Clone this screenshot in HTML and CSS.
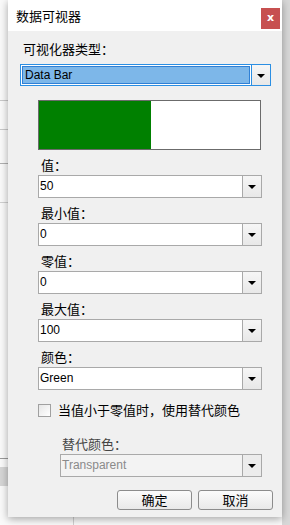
FILE: index.html
```html
<!DOCTYPE html>
<html lang="zh-CN">
<head>
<meta charset="utf-8">
<title>数据可视器</title>
<link rel="stylesheet" href="styles.css">
</head>
<body>
<div class="dialog">
  <div class="titlebar">
    <span class="title">数据可视器</span>
    <span class="close">x</span>
  </div>
  <div class="content">
    <div class="label top-label">可视化器类型：</div>
    <div class="combo combo-focus">
      <div class="focus-wrap"><div class="selected">Data Bar</div></div>
      <div class="drop"><span class="arrow"></span></div>
    </div>

    <div class="fields">
      <div class="bar"><div class="bar-fill" style="width:50.5%"></div></div>

      <div class="label">值：</div>
      <div class="combo"><div class="value">50</div><div class="drop"><span class="arrow"></span></div></div>

      <div class="label">最小值：</div>
      <div class="combo"><div class="value">0</div><div class="drop"><span class="arrow"></span></div></div>

      <div class="label">零值：</div>
      <div class="combo"><div class="value">0</div><div class="drop"><span class="arrow"></span></div></div>

      <div class="label">最大值：</div>
      <div class="combo"><div class="value">100</div><div class="drop"><span class="arrow"></span></div></div>

      <div class="label">颜色：</div>
      <div class="combo"><div class="value">Green</div><div class="drop"><span class="arrow"></span></div></div>

      <div class="check-row">
        <span class="checkbox"></span>
        <span class="check-label">当值小于零值时，使用替代颜色</span>
      </div>

      <div class="alt">
        <div class="label alt-label">替代颜色：</div>
        <div class="combo combo-disabled"><div class="value">Transparent</div><div class="drop"><span class="arrow"></span></div></div>
      </div>
    </div>

    <div class="buttons">
      <button class="btn">确定</button>
      <button class="btn">取消</button>
    </div>
  </div>
</div>
</body>
</html>
```

FILE: styles.css
```css
html, body {
  margin: 0;
  padding: 0;
}
body {
  width: 290px;
  height: 525px;
  overflow: hidden;
  font-family: "Noto Sans CJK SC", "Liberation Sans", sans-serif;
  font-size: 13px;
  color: #000;
  background:
    linear-gradient(#c9c9c9, #c9c9c9) 0 100px / 8px 1px no-repeat,
    linear-gradient(#c9c9c9, #c9c9c9) 0 129px / 8px 1px no-repeat,
    linear-gradient(#b0b0b0, #b0b0b0) 0 163px / 8px 1px no-repeat,
    linear-gradient(#d0d0d0, #d0d0d0) 0 202px / 8px 1px no-repeat,
    linear-gradient(#9a9a9a, #9a9a9a) 0 458px / 8px 1px no-repeat,
    linear-gradient(#d6d6d6, #d6d6d6) 0 467px / 8px 19px no-repeat,
    linear-gradient(#d0d0d0, #d0d0d0) 73px 517px / 1px 8px no-repeat,
    linear-gradient(#d8d8d8, #d8d8d8) 282px 0 / 8px 525px no-repeat,
    #fafafa;
  display: flex;
  align-items: flex-start;
}

.dialog {
  margin-left: 8px;
  width: 274px;
  height: 517px;
  background: #f0f0f0;
  box-shadow: 0 2px 8px rgba(0, 0, 0, 0.35);
  display: flex;
  flex-direction: column;
}

.titlebar {
  height: 31px;
  box-sizing: border-box;
  background: #fff;
  display: flex;
  justify-content: space-between;
  align-items: flex-start;
  padding: 8px 2px 0 8px;
}
.title {
  line-height: 16px;
  font-size: 13px;
}
.close {
  width: 19px;
  height: 21px;
  background: #c75050;
  color: #fff;
  font-family: "DejaVu Sans", sans-serif;
  font-weight: bold;
  font-size: 11px;
  line-height: 20px;
  text-align: center;
}

.content {
  flex: 1;
  padding: 10px 9px 0 12px;
  display: flex;
  flex-direction: column;
}

.label {
  line-height: 16px;
  height: 16px;
  padding-left: 3px;
  margin-top: 7px;
  margin-bottom: 2px;
  white-space: nowrap;
}
.top-label {
  margin-top: 0;
  margin-bottom: 7px;
}

.combo {
  display: flex;
  height: 23px;
  box-sizing: border-box;
  border: 1px solid #a9a9a9;
  background: #fff;
  font-family: "Liberation Sans", "Noto Sans CJK SC", sans-serif;
  font-size: 12px;
}
.value {
  flex: 1;
  line-height: 21px;
  padding-left: 1px;
  color: #000;
}
.drop {
  width: 18px;
  border-left: 1px solid #a9a9a9;
  background: linear-gradient(#f6f6f6, #e8e8e8);
  display: flex;
  align-items: center;
  justify-content: center;
}
.arrow {
  width: 0;
  height: 0;
  border-left: 4px solid transparent;
  border-right: 4px solid transparent;
  border-top: 4px solid #000;
  margin-top: 1px;
}

.combo-focus {
  width: 251px;
  height: 22px;
  border-color: #2b8fe3;
}
.combo-focus .drop {
  border-left-color: #2b8fe3;
  width: 18px;
}
.focus-wrap {
  flex: 1;
  padding: 1px;
  display: flex;
}
.selected {
  flex: 1;
  border: 1px solid #2f80d6;
  background: #7db7e9;
  line-height: 16px;
  padding-left: 2px;
  color: #000;
}

.fields {
  margin-left: 18px;
  width: 224px;
  display: flex;
  flex-direction: column;
}

.bar {
  margin-top: 14px;
  width: 223px;
  height: 50px;
  box-sizing: border-box;
  border: 1px solid #6b6b6b;
  background: #fff;
  display: flex;
}
.bar-fill {
  background: #008000;
  height: 100%;
}

.check-row {
  margin-top: 12px;
  height: 16px;
  display: flex;
  align-items: center;
  gap: 7px;
}
.checkbox {
  width: 13px;
  height: 13px;
  box-sizing: border-box;
  border: 1px solid #a0a0a0;
  background: linear-gradient(135deg, #e6e6e6, #ffffff);
}
.check-label {
  line-height: 16px;
  white-space: nowrap;
}

.alt {
  margin-left: 22px;
  margin-top: 18px;
  width: 202px;
  display: flex;
  flex-direction: column;
}
.alt-label {
  margin-top: 0;
  padding-left: 2px;
  color: #444;
}
.combo-disabled {
  background: #f3f3f3;
}
.combo-disabled .value {
  color: #8a8a8a;
}
.combo-disabled .drop {
  background: #ececec;
}

.buttons {
  margin-top: 13px;
  display: flex;
  justify-content: flex-end;
  gap: 6px;
}
.btn {
  width: 75px;
  height: 20px;
  box-sizing: border-box;
  border: 1px solid #8c8c8c;
  border-radius: 3px;
  background: linear-gradient(#fbfbfb, #e9e9e9);
  font-family: "Noto Sans CJK SC", sans-serif;
  font-size: 13px;
  line-height: 16px;
  padding: 0;
  color: #000;
}
```
